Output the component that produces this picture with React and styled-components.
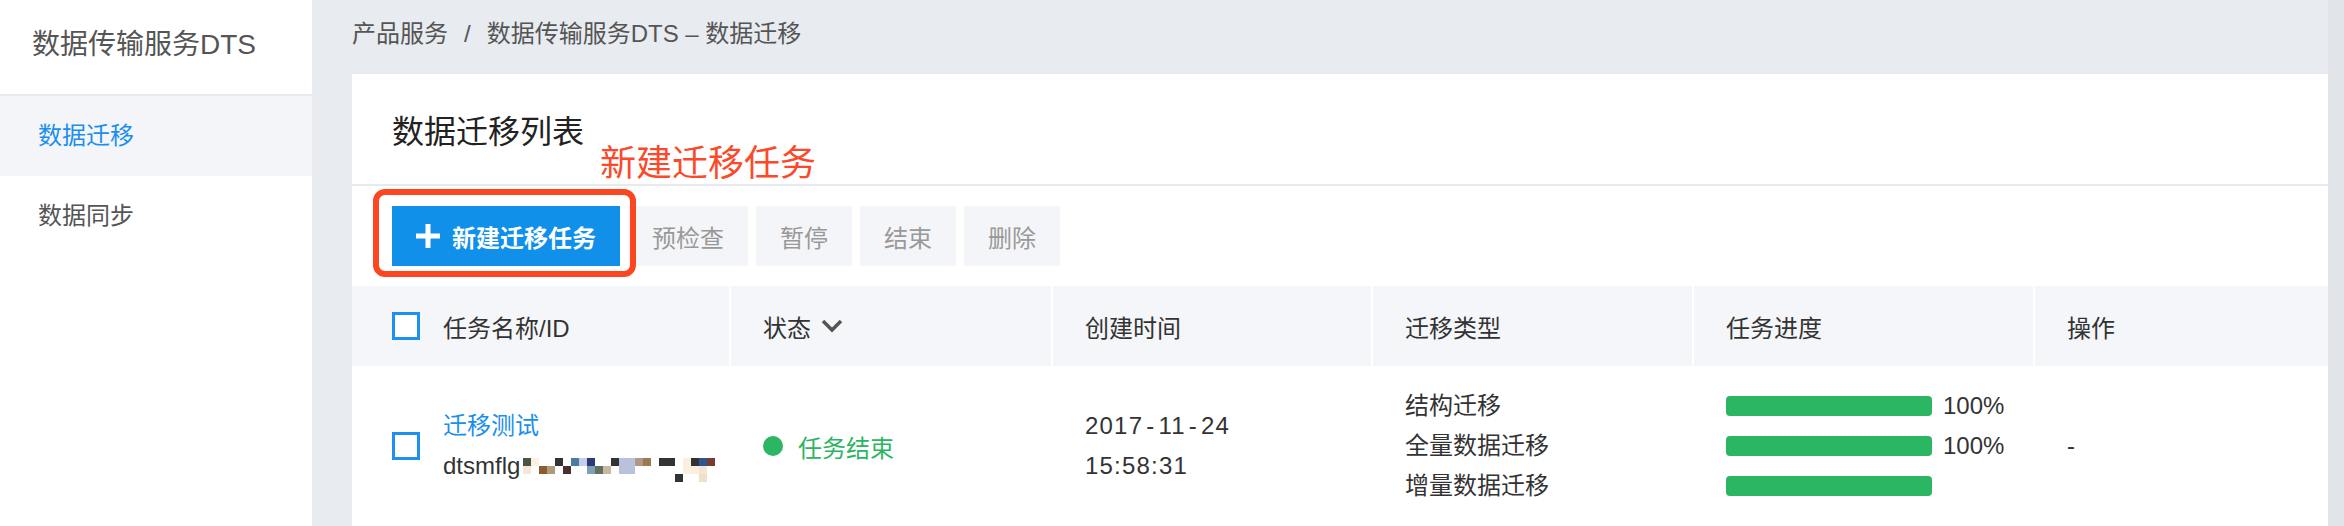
import React from "react";
import styled, { createGlobalStyle } from "styled-components";

const GlobalStyle = createGlobalStyle`
  html, body { margin: 0; padding: 0; }
  body {
    font-family: "Liberation Sans", "Noto Sans CJK SC", sans-serif;
    color: #333;
    background: #e8ebf0;
  }
`;

const Page = styled.div`
  display: flex;
  height: 526px;
  overflow: hidden;
`;

const Sidebar = styled.aside`
  width: 312px;
  flex-shrink: 0;
  background: #fff;
  display: flex;
  flex-direction: column;
`;

const SideTitle = styled.div`
  height: 94px;
  padding-left: 32px;
  line-height: 90px;
  font-size: 28px;
  color: #555;
  border-bottom: 2px solid #e8ebf0;
`;

const SideItem = styled.div`
  height: 80px;
  line-height: 80px;
  padding-left: 38px;
  font-size: 24px;
  color: ${(p) => (p.$active ? "#1a8fee" : "#555")};
  background: ${(p) => (p.$active ? "#f4f5f9" : "#fff")};
`;

const Main = styled.main`
  flex: 1;
  min-width: 0;
  display: flex;
  flex-direction: column;
  padding-left: 40px;
  background: #e8ebf0;
`;

const Breadcrumb = styled.div`
  height: 74px;
  line-height: 68px;
  font-size: 24px;
  color: #555;
  white-space: nowrap;
`;

const Sep = styled.span`
  margin: 0 16px;
`;

const Card = styled.section`
  position: relative;
  flex: 1;
  background: #fff;
  display: flex;
  flex-direction: column;
`;

const CardHeader = styled.div`
  height: 110px;
  padding-left: 40px;
  display: flex;
  align-items: center;
  border-bottom: 2px solid #e6e9ee;
`;

const CardTitle = styled.h2`
  margin: 0;
  font-size: 32px;
  font-weight: 400;
  color: #222;
`;

const Annotation = styled.div`
  position: absolute;
  left: 248px;
  top: 72px;
  font-size: 36px;
  line-height: 36px;
  color: #fb4a2a;
  white-space: nowrap;
`;

const Toolbar = styled.div`
  position: relative;
  display: flex;
  gap: 8px;
  padding: 20px 40px;
`;

const Highlight = styled.div`
  position: absolute;
  left: 21px;
  top: 3px;
  width: 263px;
  height: 88px;
  box-sizing: border-box;
  border: 6px solid #fc4521;
  border-radius: 12px;
  pointer-events: none;
`;

const Button = styled.button`
  height: 60px;
  padding: 0 24px;
  border: none;
  border-radius: 0;
  display: flex;
  align-items: center;
  gap: 12px;
  font-family: inherit;
  font-size: 24px;
  font-weight: ${(p) => (p.$primary ? 700 : 400)};
  color: ${(p) => (p.$primary ? "#fff" : "#999")};
  background: ${(p) => (p.$primary ? "#1190ea" : "#f4f5f8")};
`;

const Table = styled.div`
  display: flex;
  flex-direction: column;
`;

const Row = styled.div`
  display: grid;
  grid-template-columns: 377px 320px 318px 319px 339px 1fr;
  column-gap: 2px;
  height: ${(p) => (p.$head ? "80px" : "160px")};
`;

const HeadCell = styled.div`
  background: #f5f6fa;
  display: flex;
  align-items: center;
  padding-left: ${(p) => (p.$first ? "40px" : "32px")};
  font-size: 24px;
  color: #333;
`;

const Cell = styled.div`
  display: flex;
  align-items: center;
  padding-left: ${(p) => (p.$first ? "40px" : "32px")};
  font-size: 24px;
  color: #333;
`;

const Checkbox = styled.span`
  width: 28px;
  height: 28px;
  box-sizing: border-box;
  border: 3px solid #1e90f0;
  background: #fff;
  flex-shrink: 0;
  margin-right: 23px;
`;

const Lines = styled.div`
  display: flex;
  flex-direction: column;
  line-height: 40px;
`;

const DateLines = styled(Lines)`
  letter-spacing: 1.2px;
`;

const Hyphen = styled.span`
  margin: 0 3px;
`;

const Link = styled.span`
  color: #1a8fee;
`;

const IdLine = styled.div`
  display: flex;
  align-items: flex-start;
  white-space: nowrap;
`;

const Mosaic = styled.svg`
  margin-top: 12px;
  margin-left: 3px;
  flex-shrink: 0;
`;

const Status = styled.div`
  display: flex;
  align-items: center;
  gap: 15px;
  color: #2bb462;
`;

const Dot = styled.span`
  width: 20px;
  height: 20px;
  border-radius: 50%;
  background: #2bb664;
`;

const ProgressList = styled.div`
  display: flex;
  flex-direction: column;
`;

const ProgressRow = styled.div`
  height: 40px;
  display: flex;
  align-items: center;
  gap: 11px;
  font-size: 24px;
`;

const Bar = styled.span`
  width: 206px;
  height: 20px;
  border-radius: 4px;
  background: #2bb664;
`;

const ChevronWrap = styled.span`
  display: flex;
  margin-left: 10px;
`;

const ScrollTrack = styled.div`
  width: 16px;
  flex-shrink: 0;
  background: #e1e4e9;
`;

const mosaicCells = [
  [0, 0, "#4b5442"], [1, 0, "#fbf1e2"], [4, 0, "#333"], [6, 0, "#4a7ca0"],
  [7, 0, "#c4d0ea"], [8, 0, "#2e3a78"], [11, 0, "#333"], [12, 0, "#b8c2dc"],
  [13, 0, "#b8c2dc"], [14, 0, "#ad9a80"], [15, 0, "#9a7a50"], [17, 0, "#333"],
  [18, 0, "#333"], [20, 0, "#fbf0e0"], [21, 0, "#333"], [22, 0, "#2f5590"],
  [23, 0, "#7a3a30"],
  [0, 1, "#f3e8d8"], [2, 1, "#8a5c30"], [3, 1, "#b09a78"], [5, 1, "#4a2e30"],
  [8, 1, "#7ea0b4"], [9, 1, "#637060"], [10, 1, "#c8b8a2"], [12, 1, "#b8c2dc"],
  [13, 1, "#b8c2dc"], [20, 1, "#fbf0e0"], [21, 1, "#fbf0e0"], [22, 1, "#f5e6d4"],
  [19, 2, "#333"], [22, 2, "#f0e0c8"],
];

const PlusIcon = () => (
  <svg width="24" height="24" viewBox="0 0 24 24">
    <rect x="9.5" y="0" width="5" height="24" fill="#fff" />
    <rect x="0" y="9.5" width="24" height="5" fill="#fff" />
  </svg>
);

const Chevron = () => (
  <ChevronWrap>
    <svg width="22" height="14" viewBox="0 0 22 14">
      <polyline points="2,2 11,11 20,2" fill="none" stroke="#555" strokeWidth="3.5" />
    </svg>
  </ChevronWrap>
);

export default function App() {
  return (
    <>
      <GlobalStyle />
      <Page>
        <Sidebar>
          <SideTitle>数据传输服务DTS</SideTitle>
          <SideItem $active>数据迁移</SideItem>
          <SideItem>数据同步</SideItem>
        </Sidebar>
        <Main>
          <Breadcrumb>
            产品服务<Sep>/</Sep>数据传输服务DTS – 数据迁移
          </Breadcrumb>
          <Card>
            <CardHeader>
              <CardTitle>数据迁移列表</CardTitle>
            </CardHeader>
            <Annotation>新建迁移任务</Annotation>
            <Toolbar>
              <Button $primary>
                <PlusIcon />
                新建迁移任务
              </Button>
              <Button>预检查</Button>
              <Button>暂停</Button>
              <Button>结束</Button>
              <Button>删除</Button>
              <Highlight />
            </Toolbar>
            <Table>
              <Row $head>
                <HeadCell $first>
                  <Checkbox />
                  任务名称/ID
                </HeadCell>
                <HeadCell>
                  状态
                  <Chevron />
                </HeadCell>
                <HeadCell>创建时间</HeadCell>
                <HeadCell>迁移类型</HeadCell>
                <HeadCell>任务进度</HeadCell>
                <HeadCell>操作</HeadCell>
              </Row>
              <Row>
                <Cell $first>
                  <Checkbox />
                  <Lines>
                    <Link>迁移测试</Link>
                    <IdLine>
                      dtsmflg
                      <Mosaic width="192" height="24" viewBox="0 0 192 24">
                        {mosaicCells.map(([c, r, fill]) => (
                          <rect key={`${c}-${r}`} x={c * 8} y={r * 8} width="8" height="8" fill={fill} />
                        ))}
                      </Mosaic>
                    </IdLine>
                  </Lines>
                </Cell>
                <Cell>
                  <Status>
                    <Dot />
                    任务结束
                  </Status>
                </Cell>
                <Cell>
                  <DateLines>
                    <span>
                      2017<Hyphen>-</Hyphen>11<Hyphen>-</Hyphen>24
                    </span>
                    <span>15:58:31</span>
                  </DateLines>
                </Cell>
                <Cell>
                  <Lines>
                    <span>结构迁移</span>
                    <span>全量数据迁移</span>
                    <span>增量数据迁移</span>
                  </Lines>
                </Cell>
                <Cell>
                  <ProgressList>
                    <ProgressRow>
                      <Bar />
                      100%
                    </ProgressRow>
                    <ProgressRow>
                      <Bar />
                      100%
                    </ProgressRow>
                    <ProgressRow>
                      <Bar />
                    </ProgressRow>
                  </ProgressList>
                </Cell>
                <Cell>-</Cell>
              </Row>
            </Table>
          </Card>
        </Main>
        <ScrollTrack />
      </Page>
    </>
  );
}
